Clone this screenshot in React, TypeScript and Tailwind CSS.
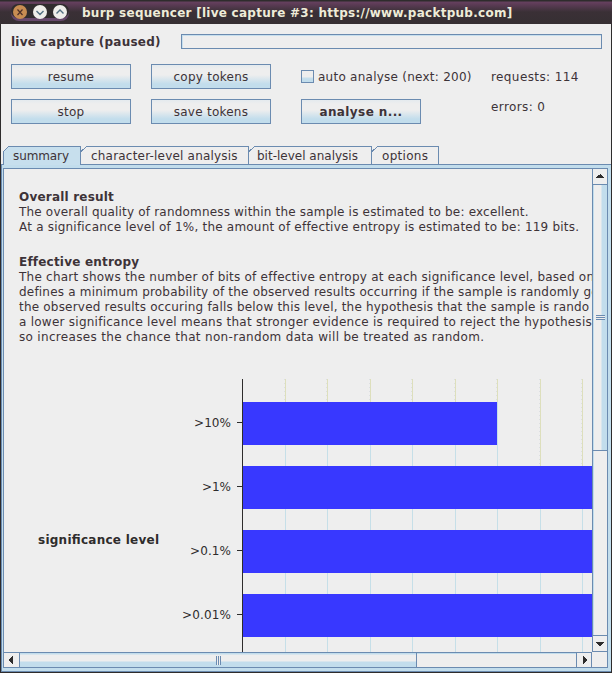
import React from "react";

const bars = [
  { label: ">10%", y: 23, w: 254, lx: 194, lw: 37 },
  { label: ">1%", y: 87, w: 350, lx: 202, lw: 29 },
  { label: ">0.1%", y: 151, w: 350, lx: 190, lw: 41 },
  { label: ">0.01%", y: 215, w: 350, lx: 182, lw: 49 },
];

function Button({ children, bold = false }: { children: React.ReactNode; bold?: boolean }) {
  return (
    <button
      className={`flex h-[25px] w-[120px] items-center justify-center border border-[#6b8bb0] bg-[linear-gradient(#e4eaee_0px,#eeeeee_4px,#eeeeee_10px,#c2ddec_19px,#c2ddec_100%)] leading-none ${
        bold ? "font-bold tracking-[0.4px]" : "tracking-[0.25px]"
      }`}
    >
      {children}
    </button>
  );
}

function Tab({
  children,
  width,
  active = false,
  className = "",
}: {
  children: React.ReactNode;
  width: number;
  active?: boolean;
  className?: string;
}) {
  const h = active ? 19 : 18;
  return (
    <div className={`relative flex h-full shrink-0 pt-[1px] ${className}`} style={{ width }}>
      <svg className="absolute left-0 top-0" width={width} height={h} shapeRendering="crispEdges">
        <path
          d={
            active
              ? `M0.5 ${h}V5.5L5.5 0.5H${width - 0.5}V${h}Z`
              : `M0 5.5L5.5 0.5H${width - 0.5}V${h}H0Z`
          }
          fill={active ? "#c7dfed" : "#eeeeee"}
        />
        <path
          d={active ? `M0.5 ${h}V5.5L5.5 0.5H${width - 0.5}V${h}` : `M0 5.5L5.5 0.5H${width - 0.5}V${h}`}
          fill="none"
          stroke="#6b8bb0"
        />
      </svg>
      <span className="relative whitespace-nowrap leading-[18px]">{children}</span>
    </div>
  );
}

function Chart() {
  return (
    <svg className="block" width="588" height="273">
      <g shapeRendering="crispEdges">
        {[281, 323, 366, 408, 451, 493, 536, 578].map((x) => (
          <React.Fragment key={x}>
            <path d={`M${x + 0.5} 0V273`} stroke="#c6dfe8" />
            <path d={`M${x + 0.5} 0V${x > 500 ? 87 : 23}`} stroke="#dddfbc" />
            <path d={`M${x - 0.5} 0V${x > 500 ? 87 : 23}`} stroke="#dcdfe2" strokeDasharray="1 3" />
          </React.Fragment>
        ))}
        {bars.map((b) => (
          <g key={b.label}>
            <rect x="239" y={b.y} width={b.w} height="43" fill="#3838ff" />
            <path d={`M233 ${b.y + 20.5}H239`} stroke="#2e2c2c" />
          </g>
        ))}
        <path d="M238.5 0V273" stroke="#2e2c2c" />
      </g>
      <g fill="#2e2c2c" fontSize="12">
        {bars.map((b) => (
          <text key={b.label} x={b.lx - 4} y={b.y + 25} textLength={b.lw}>
            {b.label}
          </text>
        ))}
        <text x="34" y="165" fontWeight="bold" textLength="121">
          significance level
        </text>
      </g>
    </svg>
  );
}

function Arrow({ d }: { d: string }) {
  return (
    <svg width="9" height="9" viewBox="0 0 9 9" shapeRendering="crispEdges">
      <path d={d} fill="#2e2c2c" />
    </svg>
  );
}

export default function App() {
  return (
    <div className="flex h-[673px] w-[612px] flex-col overflow-hidden bg-[#2e2c2c] font-['DejaVu_Sans',sans-serif] text-[12px] text-[#3d3338]">
      <header className="flex h-6 shrink-0 items-center bg-[linear-gradient(#2e2c2c_1px,#66405f_2px,#55394f_6px,#3a3036_12px,#362f33_100%)]">
        <svg width="72" height="24" className="shrink-0">
          <rect x="11" y="5" width="58" height="16" rx="8" fill="#66486b" />
          <rect x="11" y="4" width="58" height="14" rx="7" fill="#302c2e" />
          <circle cx="20" cy="12" r="7" fill="#c78d52" />
          <circle cx="40" cy="12" r="7" fill="#eeeeea" />
          <circle cx="60" cy="12" r="7" fill="#eeeeea" />
          <path d="M17.5 9.5l5 5.5M22.5 9.5l-5 5.5" stroke="#4d3028" strokeWidth="1.2" />
          <path d="M36.5 11l3.5 3.5 3.5-3.5M56.5 13.5l3.5-3.5 3.5 3.5" fill="none" stroke="#527082" strokeWidth="1.4" />
        </svg>
        <h1 className="ml-[10px] mt-px whitespace-nowrap font-bold tracking-[0.26px] text-[#eeecd8]">
          burp sequencer [live capture #3: https://www.packtpub.com]
        </h1>
      </header>

      <main className="mx-px mb-px flex min-h-0 flex-1 flex-col bg-[#eeeeee]">
        <div className="flex h-[34px] shrink-0 items-center pl-[10px] pr-[9px]">
          <span className="mt-[2px] w-[170px] whitespace-nowrap font-bold tracking-[0.24px]">live capture (paused)</span>
          <div className="h-[15px] flex-1 border border-[#6b8bb0] shadow-[inset_1px_1px_#c7dfed]" />
        </div>

        <div className="flex h-[88px] shrink-0 gap-5 pl-[10px] pt-[6px]">
          <div className="flex flex-col gap-[10px]">
            <Button>resume</Button>
            <Button>stop</Button>
          </div>
          <div className="flex flex-col gap-[10px]">
            <Button>copy tokens</Button>
            <Button>save tokens</Button>
          </div>
          <div className="ml-[10px] flex w-[180px] flex-col gap-[10px]">
            <label className="flex h-[25px] items-center gap-1 whitespace-nowrap tracking-[0.25px]">
              <span className="size-[13px] shrink-0 border border-[#6b8bb0] bg-[linear-gradient(#eeeeee_50%,#c2ddec_70%)]" />
              auto analyse (next: 200)
            </label>
            <Button bold>analyse n...</Button>
          </div>
          <div className="-ml-[10px] flex flex-col gap-[5px] whitespace-nowrap tracking-[0.4px]">
            <span className="flex h-[25px] items-center">requests: 114</span>
            <span className="flex h-[25px] items-center">errors: 0</span>
          </div>
        </div>

        <nav className="flex h-[18px] shrink-0 pl-[2px]">
          <Tab width={78} active className="pl-[10px] tracking-[-0.1px]">summary</Tab>
          <Tab width={168} className="pl-[10px] tracking-[0.2px]">character-level analysis</Tab>
          <Tab width={123} className="pl-[8px]">bit-level analysis</Tab>
          <Tab width={67} className="pl-[10px] tracking-[0.3px]">options</Tab>
        </nav>

        <section className="flex min-h-0 flex-1 flex-col border-y border-l border-[#6b8bb0] bg-[#c2ddec] pb-[3px] pl-px pr-[3px] pt-[3px]">
          <div className="grid min-h-0 flex-1 grid-cols-[588px_15px] grid-rows-[483px_15px] border border-[#6b8bb0] bg-[#eeeeee]">
            <article className="overflow-hidden whitespace-nowrap leading-[15px]">
              <div className="h-[210px] pl-[15px] pt-[21px]">
                <h2 className="font-bold tracking-[0.2px]">Overall result</h2>
                <p className="tracking-[0.185px]">The overall quality of randomness within the sample is estimated to be: excellent.</p>
                <p className="tracking-[0.205px]">At a significance level of 1%, the amount of effective entropy is estimated to be: 119 bits.</p>
                <h2 className="mt-5 font-bold tracking-[0.2px]">Effective entropy</h2>
                <p className="tracking-[0.23px]">The chart shows the number of bits of effective entropy at each significance level, based on</p>
                <p className="tracking-[0.2px]">defines a minimum probability of the observed results occurring if the sample is randomly ge</p>
                <p className="tracking-[0.2px]">the observed results occuring falls below this level, the hypothesis that the sample is rando</p>
                <p className="tracking-[0.25px]">a lower significance level means that stronger evidence is required to reject the hypothesis</p>
                <p className="tracking-[0.32px]">so increases the chance that non-random data will be treated as random.</p>
              </div>
              <Chart />
            </article>

            <aside className="flex flex-col border-b border-l border-[#6b8bb0]">
              <div className="flex h-[16px] items-center justify-center border-b border-[#6b8bb0]">
                <Arrow d="M4 2h1v1h1v1h1v1h1v1H0V5h1V4h1V3h2z" />
              </div>
              <div className="flex h-[266px] items-center justify-center border-b border-[#6b8bb0] bg-[linear-gradient(90deg,#c2ddec_1px,#eeeeee_1px,#eeeeee_8px,#c2ddec_9px)]">
                <span className="h-[5px] w-[9px] bg-[repeating-linear-gradient(#6b8bb0_0px,#6b8bb0_1px,#eeeeee_1px,#eeeeee_2px)]" />
              </div>
              <div className="flex-1 border-l border-[#c2ddec]" />
              <div className="flex h-[16px] items-center justify-center border-t border-[#6b8bb0]">
                <Arrow d="M0 3h8v1H7v1H6v1H5v1H3V6H2V5H1V4H0z" />
              </div>
            </aside>

            <div className="flex border-t border-[#6b8bb0]">
              <div className="flex w-[16px] items-center justify-center border-r border-[#6b8bb0]">
                <Arrow d="M6 0v8H5V7H4V6H3V5H2V3h1V2h1V1h1V0z" />
              </div>
              <div className="flex w-[397px] items-center justify-center border-r border-[#6b8bb0] bg-[linear-gradient(#c2ddec_1px,#eeeeee_2px,#eeeeee_8px,#c2ddec_9px)]">
                <span className="h-[9px] w-[5px] bg-[repeating-linear-gradient(90deg,#6b8bb0_0px,#6b8bb0_1px,#eeeeee_1px,#eeeeee_2px)]" />
              </div>
              <div className="flex-1 border-t border-[#c2ddec]" />
              <div className="flex w-[16px] items-center justify-center border-x border-[#6b8bb0]">
                <Arrow d="M3 0h1v1h1v1h1v1h1v2H6v1H5v1H4v1H3z" />
              </div>
            </div>
            <div />
          </div>
        </section>
      </main>
    </div>
  );
}
